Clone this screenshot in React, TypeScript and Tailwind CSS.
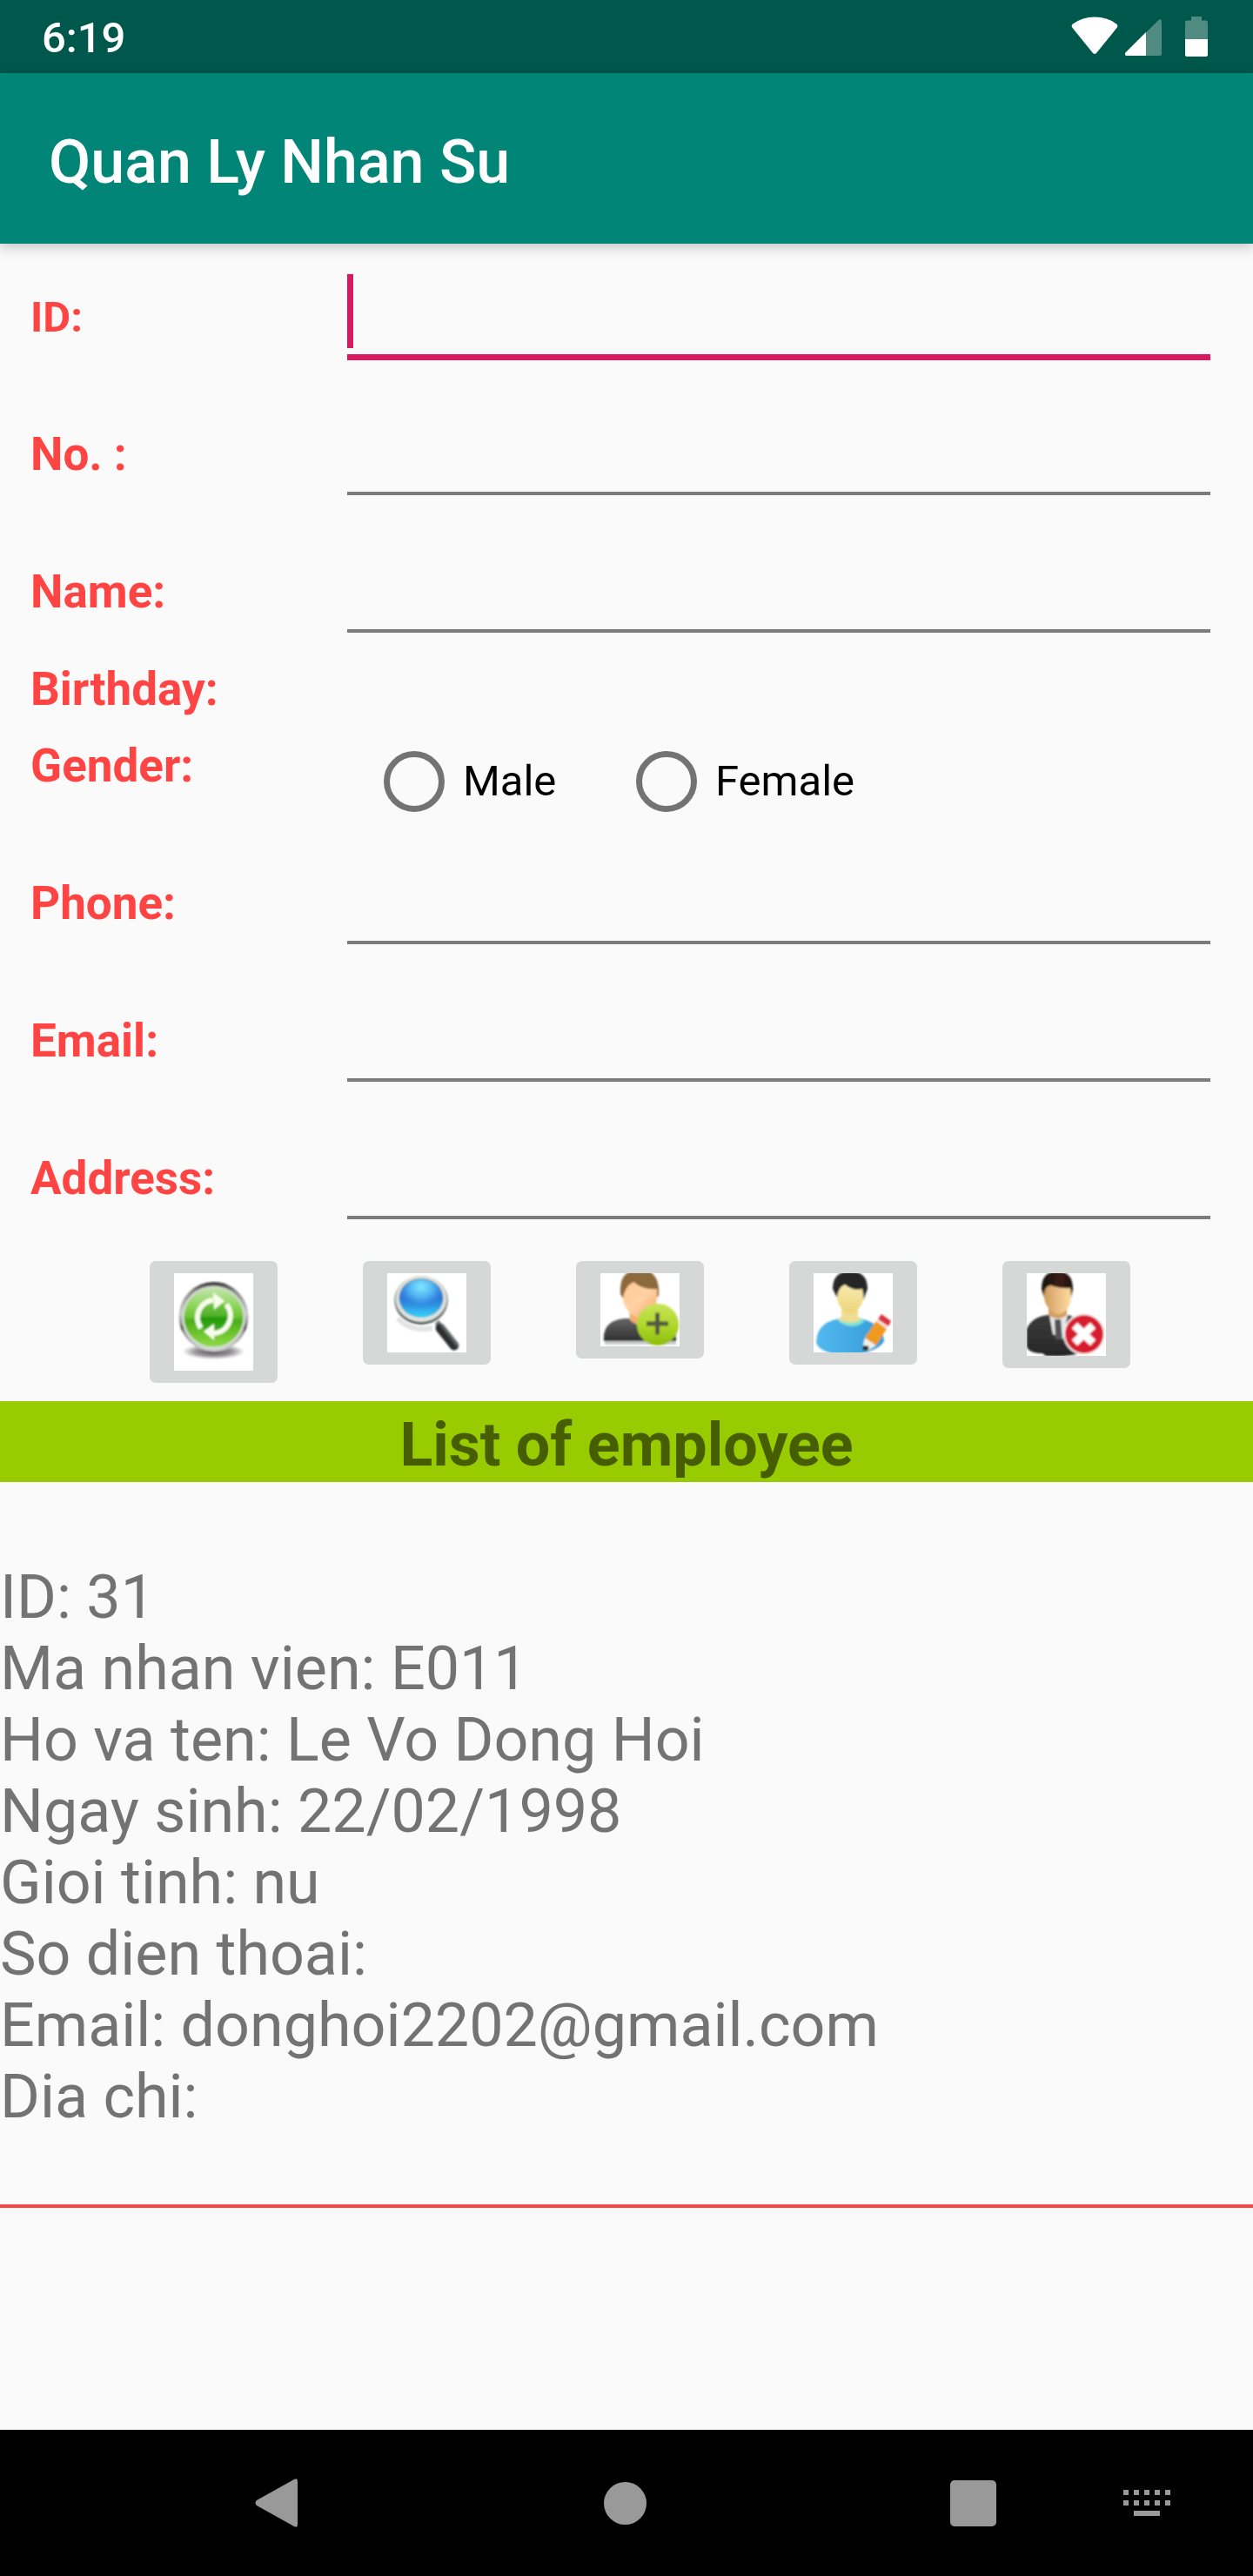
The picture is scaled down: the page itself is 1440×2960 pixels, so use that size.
import React from "react";

function StatusIcons() {
  return (
    <svg width="158" height="46" viewBox="0 0 158 46" aria-hidden="true">
      <path d="M1.5 13 Q-0.5 10.5 2 8.5 Q13 0.5 27 0.5 Q41 0.5 52 8.5 Q54.500 10.500 52.500 13 L29 42 Q27 44 25 42 Z" fill="#fff" />
      <path d="M64 45 Q61.500 45 62 42 L100.500 4 Q104 2 104 6 V43 Q104 45 102 45 Z" fill="#4f8b80" />
      <path d="M64 45 Q61.500 45 62 42 L86 18 V45 Z" fill="#fff" />
      <path d="M131 26 V7 Q131 4.500 133.500 4.500 H138 V0 H150 V4.500 H154.500 Q157 4.500 157 7 V26 Z" fill="#4f8b80" />
      <path d="M131 26 H157 V44 Q157 46 155 46 H133 Q131 46 131 44 Z" fill="#fff" />
    </svg>
  );
}

function Soft({ id }: { id: string }) {
  return (
    <filter id={id} x="-10%" y="-10%" width="120%" height="120%">
      <feGaussianBlur stdDeviation="0.8" />
    </filter>
  );
}

function RefreshIcon() {
  return (
    <svg width="91" height="112" viewBox="0 0 91 112" className="bg-white" aria-hidden="true">
      <defs>
        <Soft id="r-soft" />
        <linearGradient id="r-ring" x1="0" y1="0" x2="0" y2="1">
          <stop offset="0" stopColor="#333" />
          <stop offset="0.14" stopColor="#8a8d88" />
          <stop offset="0.45" stopColor="#c9cbc9" />
          <stop offset="0.6" stopColor="#8b8d8b" />
          <stop offset="0.66" stopColor="#4a4c4a" />
          <stop offset="0.74" stopColor="#9a9c9a" />
          <stop offset="1" stopColor="#d5d5d5" />
        </linearGradient>
        <linearGradient id="r-green" x1="0" y1="0" x2="0" y2="1">
          <stop offset="0" stopColor="#c3e5ae" />
          <stop offset="0.3" stopColor="#8fd65c" />
          <stop offset="0.5" stopColor="#6cc433" />
          <stop offset="0.56" stopColor="#4cae18" />
          <stop offset="1" stopColor="#8fdb45" />
        </linearGradient>
        <radialGradient id="r-shadow">
          <stop offset="0" stopColor="#55505a" />
          <stop offset="0.6" stopColor="#9a969c" />
          <stop offset="1" stopColor="#fff" />
        </radialGradient>
        <linearGradient id="r-core" x1="0" y1="0" x2="0" y2="1">
          <stop offset="0" stopColor="#7cc94c" />
          <stop offset="0.5" stopColor="#4fae24" />
          <stop offset="0.52" stopColor="#219a0b" />
          <stop offset="1" stopColor="#45b018" />
        </linearGradient>
      </defs>
      <g filter="url(#r-soft)">
        <ellipse cx="45.500" cy="90" rx="36" ry="9" fill="url(#r-shadow)" />
        <circle cx="45.500" cy="50" r="40" fill="url(#r-ring)" />
        <circle cx="45.500" cy="51" r="36.500" fill="#d6dcd2" />
        <circle cx="45.500" cy="50.500" r="34" fill="url(#r-green)" />
        <circle cx="46" cy="50" r="18" fill="url(#r-core)" />
        <path d="M31 63 A20 20 0 0 1 45 31" fill="none" stroke="#f6fdea" strokeWidth="6" />
        <path d="M45 22 L58 32 L46 42 Z" fill="#f6fdea" />
        <path d="M60 36 A20 20 0 0 1 45 69" fill="none" stroke="#f6fdea" strokeWidth="6" />
        <path d="M46 58 L34 67 L46 77 Z" fill="#f6fdea" />
      </g>
    </svg>
  );
}

function SearchIcon() {
  return (
    <svg width="91" height="91" viewBox="0 0 91 91" className="bg-white" aria-hidden="true">
      <defs>
        <Soft id="s-soft" />
        <radialGradient id="s-top" cx="0.5" cy="0.2" r="0.6">
          <stop offset="0" stopColor="#7eeaff" />
          <stop offset="0.5" stopColor="#4dacf0" />
          <stop offset="1" stopColor="#2a72d6" stopOpacity="0" />
        </radialGradient>
        <linearGradient id="s-base" x1="0" y1="0" x2="0" y2="1">
          <stop offset="0" stopColor="#3689dd" />
          <stop offset="0.5" stopColor="#2a74d6" />
          <stop offset="0.75" stopColor="#2fa6ea" />
          <stop offset="1" stopColor="#3bd3f8" />
        </linearGradient>
        <linearGradient id="s-handle" gradientUnits="userSpaceOnUse" x1="61" y1="76" x2="74" y2="66">
          <stop offset="0" stopColor="#2a2e2e" />
          <stop offset="0.5" stopColor="#2a2e2e" />
          <stop offset="1" stopColor="#a8b0b2" />
        </linearGradient>
        <linearGradient id="s-rim" x1="0" y1="0" x2="0" y2="1">
          <stop offset="0" stopColor="#b9bfbc" />
          <stop offset="0.5" stopColor="#9aa39f" />
          <stop offset="1" stopColor="#3f4945" />
        </linearGradient>
      </defs>
      <g filter="url(#s-soft)">
        <path d="M12 52 Q28 68 52 63" fill="none" stroke="#e3e3e3" strokeWidth="6" />
        <ellipse cx="39" cy="31" rx="31" ry="28" fill="url(#s-rim)" />
        <ellipse cx="39" cy="29.500" rx="29" ry="26.500" fill="#dfe5e0" />
        <ellipse cx="39" cy="28.500" rx="25.500" ry="22.500" fill="#71868e" />
        <ellipse cx="39" cy="29" rx="25" ry="22" fill="url(#s-base)" />
        <ellipse cx="39" cy="29" rx="25" ry="22" fill="url(#s-top)" />
        <path d="M57 56 L62 62" stroke="#70787a" strokeWidth="6" />
        <path d="M61 63 L77 83" stroke="url(#s-handle)" strokeWidth="11" strokeLinecap="round" />
      </g>
    </svg>
  );
}

function AddUserIcon() {
  return (
    <svg width="91" height="84" viewBox="0 0 91 84" className="bg-white" aria-hidden="true">
      <defs>
        <Soft id="a-soft" />
        <linearGradient id="a-face" x1="0" y1="0" x2="1" y2="1">
          <stop offset="0" stopColor="#ffc891" />
          <stop offset="0.5" stopColor="#ffd2a6" />
          <stop offset="1" stopColor="#f5a55e" />
        </linearGradient>
        <linearGradient id="a-body" x1="0" y1="0" x2="0" y2="1">
          <stop offset="0" stopColor="#666" />
          <stop offset="1" stopColor="#303030" />
        </linearGradient>
        <linearGradient id="a-badge" x1="0" y1="0" x2="0" y2="1">
          <stop offset="0" stopColor="#c8e45a" />
          <stop offset="0.5" stopColor="#b0d82e" />
          <stop offset="1" stopColor="#8dbd08" />
        </linearGradient>
      </defs>
      <g filter="url(#a-soft)">
        <rect x="5" y="78" width="82" height="4" fill="#c9c9c9" />
        <path d="M4 78 Q2 54 28 52 H64 Q88 54 87 78 Z" fill="url(#a-body)" />
        <path d="M33 40 H56 V52 Q48 66 34 54 Z" fill="#f3ae72" />
        <path d="M23 24 Q21 -4 45 -4 Q69 -4 67 26 L60 32 H28 Z" fill="#8c6a3b" />
        <path d="M26 30 Q27 16 38 10 Q50 20 65 18 Q67 36 58 46 Q46 56 34 46 Q26 36 26 30 Z" fill="url(#a-face)" />
        <circle cx="66" cy="59" r="24" fill="url(#a-badge)" />
        <path d="M53 58 H78 M65.500 45.500 V70.500" stroke="#55593f" strokeWidth="5" />
      </g>
    </svg>
  );
}

function EditUserIcon() {
  return (
    <svg width="91" height="91" viewBox="0 0 91 91" className="bg-white" aria-hidden="true">
      <defs>
        <Soft id="e-soft" />
        <linearGradient id="e-body" x1="0" y1="0" x2="1" y2="0">
          <stop offset="0" stopColor="#52b8ef" />
          <stop offset="1" stopColor="#359bd6" />
        </linearGradient>
        <linearGradient id="e-face" x1="0" y1="0" x2="0" y2="1">
          <stop offset="0" stopColor="#f7eab0" />
          <stop offset="1" stopColor="#ecd578" />
        </linearGradient>
      </defs>
      <g filter="url(#e-soft)">
        <path d="M3 79 Q4 56 30 52 H54 Q80 58 81 78 Q76 88 52 93 H24 Q4 88 3 79 Z" fill="url(#e-body)" />
        <path d="M27 54 L32 50 H51 L59 55 Q44 68 27 54 Z" fill="#7be3d6" />
        <path d="M32 40 H51 V49 L54 54 Q42 60 29 54 L32 50 Z" fill="#f0dc92" />
        <path d="M22 18 Q22 -2 42 -2 Q62 -2 62 18 L57 31 L52 24 H30 L27 28 Z" fill="#262626" />
        <path d="M27 28 Q28 16 36 13 Q46 21 56 18 Q60 34 50 42 Q42 50 34 42 Q27 36 27 28 Z" fill="url(#e-face)" />
        <path d="M59 74 L72 83 L62 89 L56 87 Z" fill="#f4f1ea" />
        <path d="M57 83 L64 84 L62 89 L56 88 Z" fill="#222" />
        <path d="M72 55 L84 64 L72 83 L59 74 Z" fill="#ef9a1b" />
        <path d="M72 55 L75 52 L86 61 L84 64 Z" fill="#f3e6dc" />
        <path d="M78 47 L89 55 L86 61 L74 53 Z" fill="#dd3240" />
      </g>
    </svg>
  );
}

function DeleteUserIcon() {
  return (
    <svg width="91" height="95" viewBox="0 0 91 95" className="bg-white" aria-hidden="true">
      <defs>
        <Soft id="d-soft" />
        <linearGradient id="d-face" x1="0" y1="0" x2="1" y2="0">
          <stop offset="0" stopColor="#cf9a5c" />
          <stop offset="0.5" stopColor="#e8bd85" />
          <stop offset="1" stopColor="#ffdc9c" />
        </linearGradient>
        <linearGradient id="d-hair" x1="0" y1="0" x2="1" y2="0">
          <stop offset="0" stopColor="#151210" />
          <stop offset="0.6" stopColor="#3b1d14" />
          <stop offset="1" stopColor="#1c1210" />
        </linearGradient>
        <linearGradient id="d-suit" x1="0" y1="0" x2="0" y2="1">
          <stop offset="0" stopColor="#3c3c3c" />
          <stop offset="1" stopColor="#262626" />
        </linearGradient>
      </defs>
      <g filter="url(#d-soft)">
        <path d="M0 84 V64 Q6 50 24 48 H46 Q62 50 68 66 V90 Q50 97 22 95 L18 92 Q2 92 0 84 Z" fill="url(#d-suit)" />
        <path d="M26 48 H47 L42 76 L30 70 Z" fill="#e4e6e8" />
        <path d="M32 53 H39 L41 76 H33 Z" fill="#505357" />
        <path d="M25 38 H46 V48 Q36 56 25 48 Z" fill="#d59d5f" />
        <path d="M17 18 Q17 -2 35 -2 Q53 -2 53 18 L51 28 L46 24 H24 L20 28 Z" fill="url(#d-hair)" />
        <path d="M20 26 Q20 14 28 14 Q40 18 50 17 Q53 34 46 42 Q36 52 27 42 Q20 36 20 26 Z" fill="url(#d-face)" />
        <circle cx="66" cy="70" r="24" fill="#f6f2f2" />
        <circle cx="66" cy="70" r="22" fill="#d61f2e" />
        <path d="M55 60 L76 80 M76 60 L55 80" stroke="#fff" strokeWidth="9" />
      </g>
    </svg>
  );
}

const labelClass = "w-[350px] shrink-0 text-[53px] leading-[62px] font-bold text-[#ff4444]";

function Field({ id, label }: { id: string; label: string }) {
  return (
    <div className="flex h-[158px] items-start">
      <label htmlFor={id} className={`${labelClass} pt-[53px]`}>{label}</label>
      <input
        id={id}
        type="text"
        className="mx-[14px] h-[131px] min-w-0 flex-1 border-b-4 border-[#7c7c7c] bg-transparent pt-8 text-[63px] text-black outline-none"
      />
    </div>
  );
}

function Radio({ label }: { label: string }) {
  return (
    <label className="flex min-w-[290px] items-center gap-[21px] pl-[21px] text-[49px] leading-[58px] text-black">
      <input type="radio" name="gender" className="size-[70px] shrink-0 appearance-none rounded-full border-[7px] border-[#737373] checked:bg-[#d81b60]" />
      {label}
    </label>
  );
}

const actions = [
  { label: "Refresh", icon: <RefreshIcon /> },
  { label: "Search", icon: <SearchIcon /> },
  { label: "Add employee", icon: <AddUserIcon /> },
  { label: "Edit employee", icon: <EditUserIcon /> },
  { label: "Delete employee", icon: <DeleteUserIcon /> },
];

const employee = [
  "ID: 31",
  "Ma nhan vien: E011",
  "Ho va ten: Le Vo Dong Hoi",
  "Ngay sinh: 22/02/1998",
  "Gioi tinh: nu",
  "So dien thoai:",
  "Email: donghoi2202@gmail.com",
  "Dia chi:",
];

export default function App() {
  return (
    <div className="flex min-h-screen flex-col bg-[#fafafa] font-['Roboto',sans-serif]">
      <div className="flex h-[84px] shrink-0 items-center justify-between bg-[#00574b] pr-[51px] pl-12 text-white">
        <time className="pt-1 text-[49px] leading-[58px] font-medium">6:19</time>
        <StatusIcons />
      </div>
      <header className="flex h-[196px] shrink-0 items-center bg-[#008577] px-14 pt-2 shadow-[0_4px_14px_rgba(0,0,0,0.22)]">
        <h1 className="text-[70px] leading-[82px] font-medium text-white">Quan Ly Nhan Su</h1>
      </header>

      <main className="flex-1">
        <form onSubmit={(e) => e.preventDefault()}>
          <div className="px-[35px]">
            <div className="flex h-[158px] items-start">
              <label htmlFor="id" className="w-[350px] shrink-0 pt-[54px] text-[49px] leading-[62px] font-bold text-[#ff4444]">ID:</label>
              <div className="relative mx-[14px] flex min-w-0 flex-1">
                <input
                  id="id"
                  type="text"
                  className="h-[134px] w-full border-b-[7px] border-[#d81b60] bg-transparent pt-8 text-[63px] text-black outline-none"
                />
                <span className="absolute top-[35px] left-0 h-[85px] w-[7px] bg-[#d81b60]" />
              </div>
            </div>
            <Field id="no" label="No. :" />
            <Field id="name" label="Name:" />
            <div className="h-[88px] pt-[7px]">
              <div className={labelClass}>Birthday:</div>
            </div>
            <div role="radiogroup" aria-labelledby="gender" className="flex h-[112px]">
              <div id="gender" className={`${labelClass} pt-[7px]`}>Gender:</div>
              <div className="flex items-center pl-[35px]">
                <Radio label="Male" />
                <Radio label="Female" />
              </div>
            </div>
            <Field id="phone" label="Phone:" />
            <Field id="email" label="Email:" />
            <Field id="address" label="Address:" />
          </div>

          <div className="flex items-start justify-center gap-[98px] py-[21px] pl-[31px]">
            {actions.map((a) => (
              <button key={a.label} type="button" aria-label={a.label} className="rounded-[7px] bg-[#d6d8d7] px-7 py-[14px]">
                {a.icon}
              </button>
            ))}
          </div>
        </form>

        <h2 className="bg-[#99cc00] pt-[9px] pb-0.5 text-center text-[70px] leading-[82px] font-bold text-[#465e00]">
          List of employee
        </h2>
        <ul>
          <li className="border-b-4 border-[#ff4444] pt-[91px] pb-[83px] text-[70px] leading-[82px] text-[#737373]">
            {employee.map((line) => (
              <p key={line}>{line}</p>
            ))}
          </li>
        </ul>
      </main>

      <nav className="flex h-[168px] shrink-0 bg-black pr-[22px] pl-[218px]">
        <button type="button" aria-label="Back" className="flex w-[200px] items-center justify-center">
          <svg width="50" height="56" viewBox="0 0 50 56" aria-hidden="true">
            <path d="M2 31 Q-1 28 2 25 L45 1 Q49 -1 49 3 V53 Q49 57 45 55 Z" fill="#999" />
          </svg>
        </button>
        <button type="button" aria-label="Home" className="flex flex-1 items-center justify-center">
          <span className="size-[49px] rounded-full bg-[#999]" />
        </button>
        <button type="button" aria-label="Recent apps" className="flex w-[200px] items-center justify-center">
          <span className="size-[53px] rounded-[5px] bg-[#999]" />
        </button>
        <button type="button" aria-label="Keyboard" className="flex w-[200px] items-center justify-center">
          <svg width="54" height="30" viewBox="0 0 54 30" fill="#999" aria-hidden="true">
            {[0, 12, 24, 36, 48].map((x) => (
              <React.Fragment key={x}>
                <rect x={x} y="0" width="6" height="6" />
                <rect x={x} y="12" width="6" height="6" />
              </React.Fragment>
            ))}
            <rect x="12" y="24" width="30" height="6" />
          </svg>
        </button>
      </nav>
    </div>
  );
}
